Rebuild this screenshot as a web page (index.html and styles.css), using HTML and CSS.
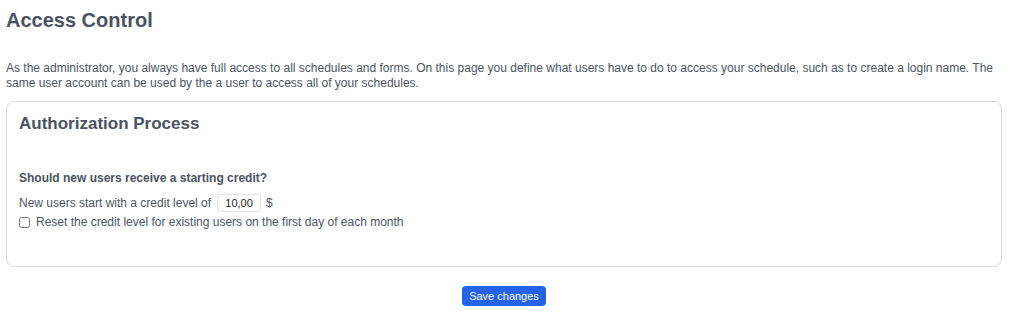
FILE: index.html
```html
<!DOCTYPE html>
<html lang="en">
<head>
  <meta charset="UTF-8">
  <title>Access Control</title>
  <link rel="stylesheet" href="styles.css">
</head>
<body>
  <div class="page">
    <h1>Access Control</h1>
    <p class="intro">As the administrator, you always have full access to all schedules and forms. On this page you define what users have to do to access your schedule, such as to create a login name. The same user account can be used by the a user to access all of your schedules.</p>

    <div class="card">
      <h2>Authorization Process</h2>
      <h3>Should new users receive a starting credit?</h3>
      <div class="row">
        <label for="credit">New users start with a credit level of</label>
        <input type="text" id="credit" class="credit" value="10,00">
        <span>$</span>
      </div>
      <div class="row">
        <input type="checkbox" id="reset" class="check">
        <label for="reset">Reset the credit level for existing users on the first day of each month</label>
      </div>
    </div>

    <div class="actions">
      <button class="btn">Save changes</button>
    </div>
  </div>
</body>
</html>
```

FILE: styles.css
```css
body {
  margin: 0;
  font-family: "Liberation Sans", Arial, sans-serif;
  color: #4b5563;
  background: #fff;
}
.page {
  padding: 6px 10px 0 6px;
}
h1 {
  margin: 0;
  padding-top: 2px;
  font-size: 20px;
  line-height: 24px;
  font-weight: bold;
  color: #4a5263;
}
.intro {
  margin: 29px 0 0;
  font-size: 12px;
  line-height: 15px;
  color: #4b5563;
}
.card {
  margin-top: 10px;
  border: 1px solid #dcdcdc;
  border-radius: 8px;
  padding: 11px 12px 36px;
}
.card h2 {
  margin: 0;
  font-size: 17px;
  line-height: 22px;
  color: #4a5263;
}
.card h3 {
  margin: 36px 0 8px;
  font-size: 12px;
  line-height: 15px;
  color: #4a5263;
}
.row {
  display: flex;
  align-items: center;
  gap: 5px;
  font-size: 12px;
  line-height: 16px;
}
.row + .row {
  margin-top: 2px;
}
.credit {
  width: 34px;
  height: 14px;
  margin-left: 1px;
  padding: 1px 4px;
  border: 1px solid #e2e2e2;
  border-radius: 3px;
  font-family: inherit;
  font-size: 11px;
  text-align: center;
  color: #222;
}
.check {
  margin: 0 1px 0 0;
  width: 11px;
  height: 11px;
}
.actions {
  display: flex;
  justify-content: center;
  padding-top: 19px;
}
.btn {
  height: 20px;
  background: #2563eb;
  color: #fff;
  border: none;
  border-radius: 4px;
  padding: 0 7px;
  font-family: inherit;
  font-size: 11px;
  line-height: 20px;
}
```
